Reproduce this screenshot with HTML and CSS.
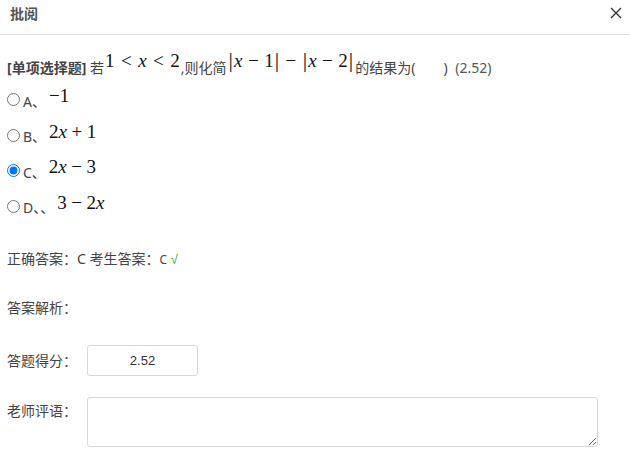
FILE: index.html
```html
<!DOCTYPE html>
<html lang="zh">
<head>
<meta charset="utf-8">
<link rel="stylesheet" href="styles.css">
</head>
<body>
<div class="dialog">
  <div class="header">
    <span class="title">批阅</span>
    <span class="close" aria-label="关闭">
      <svg width="12" height="12" viewBox="0 0 12 12"><path d="M1 1L11 11M11 1L1 11" stroke="#333" stroke-width="1.4" fill="none"/></svg>
    </span>
  </div>
  <div class="body">
    <p class="question"><b>[单项选择题]</b> 若<span class="math">1<span class="rel">&lt;</span><i>x</i><span class="rel">&lt;</span>2</span>,则化简<span class="math"><span class="bar">|</span><i>x</i><span class="bin">−</span>1<span class="bar">|</span><span class="bin">−</span><span class="bar">|</span><i>x</i><span class="bin">−</span>2<span class="bar">|</span></span>的结果为(<span class="blank"></span>) <span class="score">(2.52)</span></p>
    <ul class="options">
      <li><input type="radio" name="q"><span class="opt">A、</span><span class="math">−1</span></li>
      <li><input type="radio" name="q"><span class="opt">B、</span><span class="math">2<i>x</i><span class="bin">+</span>1</span></li>
      <li><input type="radio" name="q" checked><span class="opt">C、</span><span class="math">2<i>x</i><span class="bin">−</span>3</span></li>
      <li><input type="radio" name="q"><span class="opt">D、、</span><span class="math">3<span class="bin">−</span>2<i>x</i></span></li>
    </ul>
    <p class="answer">正确答案：C 考生答案：<span class="small">C</span> <span class="ok">√</span></p>
    <p class="analysis">答案解析：</p>
    <div class="field score-field">
      <label class="label">答题得分：</label>
      <input class="score-input" type="text" value="2.52">
    </div>
    <div class="field comment-field">
      <label class="label">老师评语：</label>
      <textarea class="comment"></textarea>
    </div>
  </div>
</div>
</body>
</html>
```
FILE: styles.css
```css
html, body {
  margin: 0;
  padding: 0;
  background: #fff;
}
body {
  font-family: "Noto Sans", "Noto Sans CJK SC", sans-serif;
  font-size: 14px;
  color: #444;
}
.dialog {
  width: 630px;
  height: 454px;
  overflow: hidden;
}
.header {
  display: flex;
  justify-content: space-between;
  align-items: flex-start;
  height: 35px;
  box-sizing: border-box;
  border-bottom: 1px solid #e3e3e3;
  padding: 4px 8px 0 10px;
}
.title {
  font-weight: bold;
  color: #555;
  line-height: 20px;
  font-size: 14px;
}
.close {
  display: flex;
  margin-top: 3px;
}
.body {
  padding: 14px 0 0 7px;
}
.question {
  margin: 0;
  height: 30px;
  line-height: 30px;
  white-space: nowrap;
}
.question b {
  font-weight: bold;
}
.math {
  font-family: "Liberation Serif", "DejaVu Serif", serif;
  font-size: 19px;
  color: #111;
  vertical-align: 6px;
  line-height: 1;
}
.math i {
  font-style: italic;
}
.rel {
  margin: 0 6.5px;
}
.bin {
  margin: 0 4.5px;
}
.question .bin {
  margin: 0 5.5px;
}
.bar {
  font-size: 22px;
  margin: 0 1px;
}
.question .math {
  margin: 0 1px;
}
.blank {
  display: inline-block;
  width: 28px;
}
.score {
  color: #555;
  margin-left: 4px;
}
.options {
  list-style: none;
  margin: 3px 0 0;
  padding: 0;
}
.options li {
  height: 35.5px;
  display: flex;
  align-items: center;
}
.options input {
  margin: 0 3px 0 0;
  width: 13px;
  height: 13px;
}
.opt {
  line-height: 20px;
  padding-top: 4px;
  margin-right: 3px;
}
.options .math {
  vertical-align: 0;
  margin-top: -8px;
}
.answer {
  margin: 25px 0 0;
  line-height: 20px;
}
.small {
  font-size: 12px;
}
.ok {
  color: #2ea82e;
  font-size: 13px;
  font-family: "Liberation Sans", sans-serif;
}
.analysis {
  margin: 28px 0 0;
  line-height: 20px;
}
.field {
  display: flex;
}
.label {
  width: 80px;
  flex: none;
  line-height: 20px;
}
.score-field {
  margin-top: 27px;
  align-items: center;
}
.score-input {
  width: 111px;
  height: 31px;
  box-sizing: border-box;
  border: 1px solid #d9d9d9;
  border-radius: 3px;
  text-align: center;
  font-family: "Liberation Sans", Arial, sans-serif;
  font-size: 13px;
  color: #333;
  padding: 0;
  margin: 0;
}
.comment-field {
  margin-top: 21px;
  align-items: flex-start;
}
.comment-field .label {
  margin-top: 4px;
}
.comment {
  width: 511px;
  height: 50px;
  box-sizing: border-box;
  border: 1px solid #d9d9d9;
  border-radius: 3px;
  margin: 0;
  padding: 4px;
  font-family: inherit;
}
```
